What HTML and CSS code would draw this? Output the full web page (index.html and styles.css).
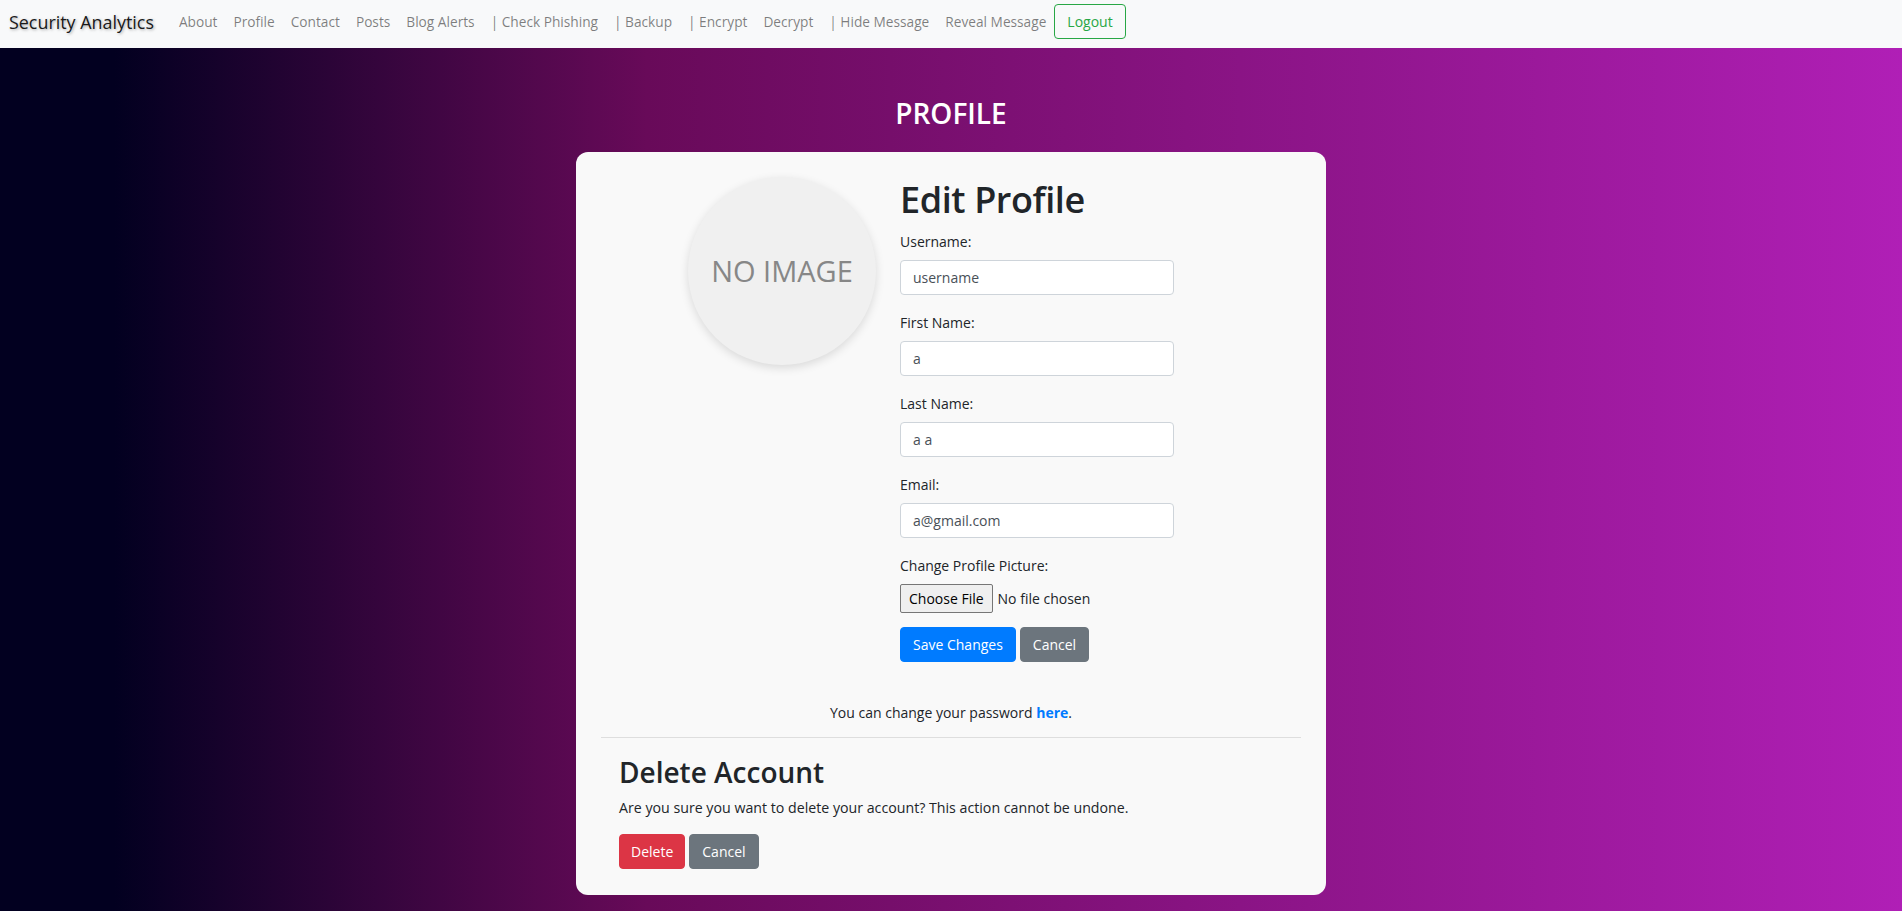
FILE: index.html
```html
<!DOCTYPE html>
<html lang="en">
<head>
<meta charset="utf-8">
<title>Profile</title>
<link rel="stylesheet" href="styles.css">
</head>
<body>
<nav class="navbar">
  <a class="brand" href="#">Security Analytics</a>
  <ul class="nav">
    <li><a class="nav-link" href="#">About</a></li>
    <li><a class="nav-link" href="#">Profile</a></li>
    <li><a class="nav-link" href="#">Contact</a></li>
    <li><a class="nav-link" href="#">Posts</a></li>
    <li><a class="nav-link" href="#">Blog Alerts</a></li>
    <li><a class="nav-link" href="#">| Check Phishing</a></li>
    <li><a class="nav-link" href="#">| Backup</a></li>
    <li><a class="nav-link" href="#">| Encrypt</a></li>
    <li><a class="nav-link" href="#">Decrypt</a></li>
    <li><a class="nav-link" href="#">| Hide Message</a></li>
    <li><a class="nav-link" href="#">Reveal Message</a></li>
  </ul>
  <button class="btn btn-outline-success" type="button">Logout</button>
</nav>

<main class="page">
  <h2 class="page-title">PROFILE</h2>
  <div class="card">
    <div class="profile-row">
      <div class="avatar"><span>NO IMAGE</span></div>
      <form class="profile-form">
        <h1 class="form-title">Edit Profile</h1>
        <div class="form-group">
          <label class="form-label">Username:</label>
          <input class="form-control" type="text" value="username">
        </div>
        <div class="form-group">
          <label class="form-label">First Name:</label>
          <input class="form-control" type="text" value="a">
        </div>
        <div class="form-group">
          <label class="form-label">Last Name:</label>
          <input class="form-control" type="text" value="a a">
        </div>
        <div class="form-group">
          <label class="form-label">Email:</label>
          <input class="form-control" type="text" value="a@gmail.com">
        </div>
        <div class="form-group form-group-file">
          <label class="form-label">Change Profile Picture:</label>
          <input class="form-file" type="file">
        </div>
        <div class="actions">
          <button class="btn btn-primary" type="button">Save Changes</button>
          <button class="btn btn-secondary" type="button">Cancel</button>
        </div>
      </form>
    </div>
    <p class="pw-note">You can change your password <a class="pw-link" href="#">here</a>.</p>
    <hr class="divider">
    <div class="delete-section">
      <h2 class="delete-title">Delete Account</h2>
      <p class="delete-text">Are you sure you want to delete your account? This action cannot be undone.</p>
      <div class="actions">
        <button class="btn btn-danger" type="button">Delete</button>
        <button class="btn btn-secondary" type="button">Cancel</button>
      </div>
    </div>
  </div>
</main>
</body>
</html>
```

FILE: styles.css
```css
html, body {
  margin: 0;
  padding: 0;
}

body {
  min-height: 911px;
  font-family: "Open Sans", "Noto Sans", sans-serif;
  font-size: 14px;
  line-height: 1.5;
  color: #212529;
  background: linear-gradient(90deg, #020020 6%, #680a59 34%, #b01fb6 100%);
}

.navbar {
  display: flex;
  align-items: flex-start;
  box-sizing: border-box;
  height: 48px;
  padding: 4px 8px 0 9px;
  background: #f8f9fa;
}

.brand {
  padding: 5px 0;
  margin-right: 17px;
  font-size: 17.9px;
  line-height: 26px;
  color: rgba(0, 0, 0, 0.9);
  text-decoration: none;
  text-shadow: 1px 1px 3px rgba(0, 0, 0, 0.35);
}

.nav {
  display: flex;
  list-style: none;
  margin: 0;
  padding: 0;
}

.nav-link {
  display: block;
  padding: 7px 8px;
  font-size: 13.7px;
  color: rgba(0, 0, 0, 0.5);
  text-decoration: none;
  line-height: 21px;
}

.btn {
  display: inline-block;
  box-sizing: border-box;
  height: 35px;
  padding: 6px 12px;
  font-family: inherit;
  font-size: 14px;
  line-height: 21px;
  border: 1px solid transparent;
  border-radius: 4px;
  cursor: pointer;
  color: #fff;
}

.btn-outline-success {
  color: #28a745;
  border-color: #28a745;
  background: transparent;
}

.btn-primary {
  background: #007bff;
  border-color: #007bff;
}

.btn-secondary {
  background: #6c757d;
  border-color: #6c757d;
}

.btn-danger {
  background: #dc3545;
  border-color: #dc3545;
  padding: 6px 11px;
}

.page {
  padding-top: 49px;
  padding-bottom: 14px;
}

.page-title {
  margin: 0 0 21px;
  text-align: center;
  color: #fff;
  font-size: 28px;
  font-weight: 600;
  line-height: 1.2;
}

.card {
  box-sizing: border-box;
  width: 750px;
  margin: 0 auto;
  padding: 25px 25px 26px;
  background: #f9f9f9;
  border-radius: 12px;
}

.profile-row {
  display: flex;
  justify-content: center;
  gap: 24px;
}

.avatar {
  flex: none;
  display: flex;
  align-items: center;
  justify-content: center;
  width: 188px;
  height: 188px;
  border-radius: 50%;
  background: #f0f0f0;
  box-shadow: 0 3px 10px rgba(0, 0, 0, 0.13);
  color: #878787;
  font-size: 29px;
  line-height: 1;
}

.profile-form {
  width: 314px;
  padding-top: 1px;
}

.form-title {
  margin: 0 0 10px;
  font-size: 36px;
  font-weight: 600;
  line-height: 1.2;
  letter-spacing: -0.4px;
}

.form-group {
  margin-bottom: 17px;
}

.form-group-file {
  margin-bottom: 14px;
}

.form-label {
  display: block;
  margin-bottom: 8px;
  line-height: 21px;
}

.form-control {
  display: block;
  box-sizing: border-box;
  width: 274px;
  height: 35px;
  padding: 6px 12px;
  font-family: inherit;
  font-size: 14px;
  line-height: 21px;
  color: #495057;
  background: #fff;
  border: 1px solid #ced4da;
  border-radius: 4px;
}

.form-file {
  display: block;
  height: 29px;
  font-family: inherit;
  font-size: 14px;
  color: #212529;
}

.form-file::file-selector-button {
  height: 29px;
  margin-right: 5px;
  padding: 0 8px;
  font-family: inherit;
  font-size: 14px;
  color: #000;
  background: #efefef;
  border: 1px solid #767676;
  border-radius: 2px;
}

.actions {
  display: flex;
  gap: 4px;
}

.pw-note {
  margin: 40px 0 0;
  text-align: center;
  line-height: 21px;
}

.pw-link {
  color: #007bff;
  font-weight: 700;
  text-decoration: none;
}

.divider {
  margin: 14px 0 18px;
  border: 0;
  border-top: 1px solid #dedede;
}

.delete-section {
  padding: 0 18px;
}

.delete-title {
  margin: 0 0 8px;
  font-size: 28px;
  font-weight: 600;
  line-height: 1.2;
}

.delete-text {
  margin: 0 0 16px;
  font-size: 14.2px;
  line-height: 21px;
}
```
